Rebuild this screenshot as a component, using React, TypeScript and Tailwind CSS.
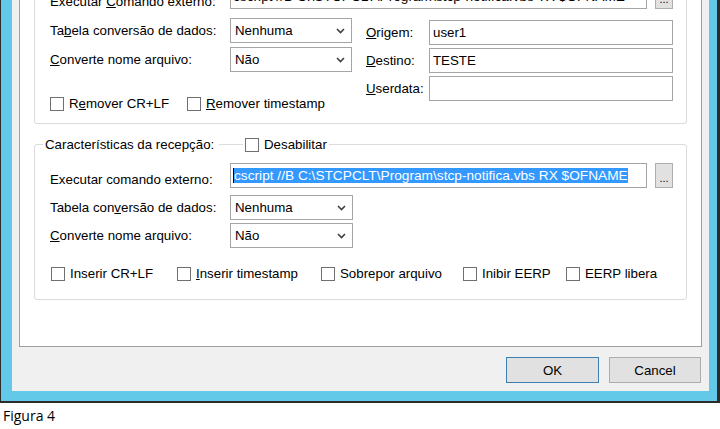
import React from 'react'

const border = 'border border-[#a5a5a5]'

function Chevron() {
  return (
    <svg width="9" height="6" viewBox="0 0 9 6" className="shrink-0">
      <path d="M1 1 L4.5 4.5 L8 1" fill="none" stroke="#404040" strokeWidth="1.6" />
    </svg>
  )
}

function Select({ value }: { value: string }) {
  return (
    <div className={`w-[123px] h-[25px] ${border} bg-white flex items-center justify-between pl-[4px] pr-[6px]`}>
      <span>{value}</span>
      <Chevron />
    </div>
  )
}

function Check({ label, width }: { label: React.ReactNode; width?: string }) {
  return (
    <div className={`flex items-center shrink-0 ${width ?? ''}`}>
      <div className="w-[14px] h-[14px] border border-[#707070] bg-white shrink-0" />
      <span className="ml-[5px] whitespace-nowrap">{label}</span>
    </div>
  )
}

function U({ children }: { children: React.ReactNode }) {
  return <span className="underline underline-offset-[1px]">{children}</span>
}

function DotsButton() {
  return (
    <div className="w-[18px] h-[25px] border border-[#adadad] bg-[#e1e1e1] flex items-end justify-center pb-[3px] text-[11px] leading-none">
      ...
    </div>
  )
}

function Row({ label, children }: { label: React.ReactNode; children: React.ReactNode }) {
  return (
    <div className="flex items-center h-[25px]">
      <div className="w-[180px] shrink-0 whitespace-nowrap">{label}</div>
      {children}
    </div>
  )
}

export default function App() {
  return (
    <div className="w-[720px] h-[429px] bg-white overflow-hidden flex flex-col font-['Liberation_Sans',Arial,sans-serif] text-[13.3px] text-black leading-[15px]">
      {/* window frame */}
      <div className="w-[720px] h-[403px] shrink-0 flex flex-col border-l-[1px] border-r-[3px] border-b-[2px] border-[#2b2b2b] bg-[#63c9e8] pl-[11px] pr-[8px] pb-[10px]">
        <div className="flex-1 bg-[#f0f0f0] flex flex-col px-[7px]">
          {/* white property panel */}
          <div className="h-[347px] shrink-0 bg-white border-x border-b border-[#a0a0a0] px-[14px]">
            {/* envio group (top cut off) */}
            <div className="h-[124px] border-x border-b border-[#dcdcdc] rounded-b-[3px] pl-[15px]">
              <div className="h-[9px] overflow-hidden flex items-end">
                <div className="w-[180px] shrink-0 whitespace-nowrap">
                  Executar <U>C</U>omando externo:
                </div>
                <div className={`w-[417px] h-[25px] ${border} flex items-center pl-[2px] shrink-0 whitespace-nowrap overflow-hidden text-[13.7px]`}>
                  cscript //B C:\STCPCLT\Program\stcp-notifica.vbs TX $OFNAME
                </div>
                <div className="ml-[8px]">
                  <DotsButton />
                </div>
              </div>
              <div className="flex mt-[9px]">
                <div className="w-[302px] shrink-0 flex flex-col">
                  <Row label={<>Ta<U>b</U>ela conversão de dados:</>}>
                    <Select value="Nenhuma" />
                  </Row>
                  <div className="mt-[4px]">
                    <Row label={<><U>C</U>onverte nome arquivo:</>}>
                      <Select value="Não" />
                    </Row>
                  </div>
                  <div className="flex mt-[24px]">
                    <Check width="w-[137px]" label={<>R<U>e</U>mover CR+LF</>} />
                    <Check label={<><U>R</U>emover timestamp</>} />
                  </div>
                </div>
                <div className="ml-[14px] mt-[2px] flex flex-col gap-[3px]">
                  {[
                    [<><U>O</U>rigem:</>, 'user1'],
                    [<><U>D</U>estino:</>, 'TESTE'],
                    [<><U>U</U>serdata:</>, ''],
                  ].map(([l, v], i) => (
                    <div key={i} className="flex items-center">
                      <div className="w-[63px] shrink-0">{l}</div>
                      <div className={`w-[244px] h-[25px] ${border} flex items-center pl-[3px]`}>{v}</div>
                    </div>
                  ))}
                </div>
              </div>
            </div>

            {/* recepção group */}
            <div className="relative mt-[20px] h-[156px] border border-[#dcdcdc] rounded-[3px] pl-[15px] pt-[18px]">
              <div className="absolute top-[-8px] left-[8px] flex items-center">
                <span className="bg-white px-[2px] w-[176px] whitespace-nowrap">Características da recepção:</span>
                <span className="bg-white ml-[24px] pl-[2px] pr-[2px]">
                  <Check label="Desabilitar" />
                </span>
              </div>
              <div className="flex h-[25px]">
                <div className="w-[180px] shrink-0 whitespace-nowrap self-end pb-[1px]">Executar comando externo:</div>
                <div className={`w-[417px] h-[25px] ${border} flex items-center pl-[2px] shrink-0 whitespace-nowrap overflow-hidden`}>
                  <span className="bg-[#3399ff] text-white border-l border-black text-[13.7px]">
                    cscript //B C:\STCPCLT\Program\stcp-notifica.vbs RX $OFNAME
                  </span>
                </div>
                <div className="ml-[8px]">
                  <DotsButton />
                </div>
              </div>
              <div className="mt-[7px]">
                <Row label={<>Tabela con<U>v</U>ersão de dados:</>}>
                  <Select value="Nenhuma" />
                </Row>
              </div>
              <div className="mt-[3px]">
                <Row label={<><U>C</U>onverte nome arquivo:</>}>
                  <Select value="Não" />
                </Row>
              </div>
              <div className="flex mt-[18px] pl-[1px]">
                <Check width="w-[126px]" label="Inserir CR+LF" />
                <Check width="w-[144px]" label={<><U>I</U>nserir timestamp</>} />
                <Check width="w-[142px]" label="Sobrepor arquivo" />
                <Check width="w-[103px]" label="Inibir EERP" />
                <Check label="EERP libera" />
              </div>
            </div>
          </div>

          {/* buttons */}
          <div className="flex justify-end gap-[10px] pt-[10px] pr-[1px]">
            <button className="w-[93px] h-[26px] border border-[#3c7fb1] bg-[#e1e1e1]">OK</button>
            <button className="w-[92px] h-[26px] border border-[#adadad] bg-[#e1e1e1]">Cancel</button>
          </div>
        </div>
      </div>
      <div className="pl-[3px] pt-[4px] font-['Open_Sans',sans-serif] text-[14px] leading-[18px]">Figura 4</div>
    </div>
  )
}
